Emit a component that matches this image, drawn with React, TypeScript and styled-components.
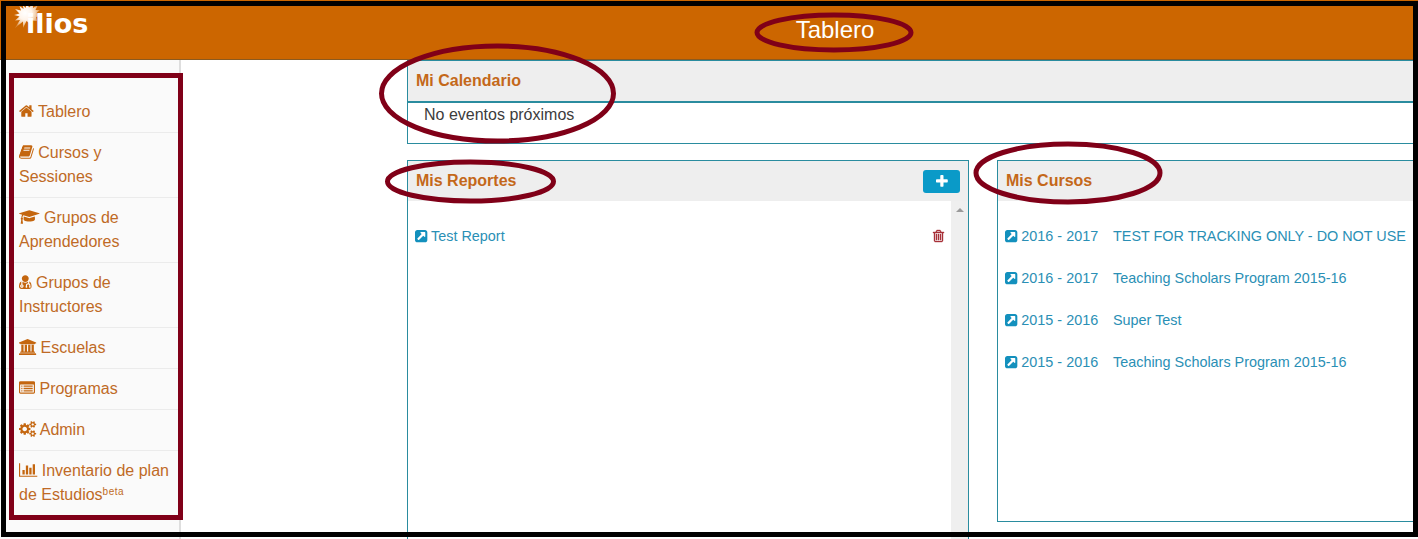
import React from "react";
import styled, { createGlobalStyle } from "styled-components";

const orange = "#cc6600";
const link = "#2a8fb5";
const teal = "#2a8c9f";
const maroon = "#800018";

const GlobalStyle = createGlobalStyle`
  * { box-sizing: border-box; }
  html, body { margin: 0; overflow: hidden; background: #fff; }
  body { font-family: "Liberation Sans", Arial, sans-serif; font-size: 16px; line-height: 24px; }
`;

const Page = styled.div`
  position: relative;
  display: flex;
  flex-direction: column;
  width: 1418px;
  height: 539px;
  overflow: hidden;
`;

const Header = styled.header`
  display: grid;
  grid-template-columns: 250px 1fr 250px;
  flex: none;
  height: 60px;
  background: ${orange};
  border-bottom: 1px solid #8a5a20;
`;

const Logo = styled.div`
  display: flex;
  align-items: flex-start;
  padding: 3px 0 0 14px;
`;

const Burst = styled.svg`
  flex: none;
  width: 30px;
  height: 28px;
`;

const LogoText = styled.span`
  margin: 5px 0 0 -18px;
  font: bold 27px/32px "DejaVu Sans", sans-serif;
  color: #fff;
`;

const Title = styled.h1`
  width: 170px;
  justify-self: center;
  text-align: center;
  margin: 15px 0 0 252px;
  font-size: 24px;
  line-height: 30px;
  font-weight: normal;
  color: #fff;
`;

const Body = styled.div`
  display: flex;
  flex: 1;
  min-height: 0;
`;

const Sidebar = styled.nav`
  flex: none;
  width: 181px;
  padding: 32px 0 0;
  background: #fafafa;
  border-right: 2px solid #dedede;
`;

const NavItem = styled.a`
  display: block;
  padding: 8px 8px 8px 19px;
  color: #bf6a26;
  border-bottom: 1px solid #ebebeb;
  &:last-child { border-bottom: 0; }
`;

const Beta = styled.sup`
  font-size: 10px;
  line-height: 0;
  letter-spacing: 0.5px;
  vertical-align: 5px;
`;

const Glyph = styled.svg<{ $color?: string }>`
  fill: ${(p) => p.$color || "currentColor"};
  overflow: visible;
`;

const Main = styled.main`
  display: flex;
  flex-direction: column;
  flex: none;
  gap: 16px;
  width: 1200px;
  margin-left: 226px;
`;

const Panel = styled.section<{ $width?: number; $height: number }>`
  flex: none;
  width: ${(p) => (p.$width ? `${p.$width}px` : "100%")};
  height: ${(p) => p.$height}px;
  border: 1px solid ${teal};
`;

const PanelHeader = styled.div<{ $ruled?: boolean }>`
  display: flex;
  align-items: center;
  justify-content: space-between;
  height: ${(p) => (p.$ruled ? 42 : 40)}px;
  padding: 0 8px;
  background: #eee;
  border-bottom: ${(p) => (p.$ruled ? `2px solid ${teal}` : "0")};
`;

const PanelTitle = styled.h2`
  margin: 0;
  font-size: 16px;
  line-height: 24px;
  color: #c4681a;
`;

const Notice = styled.p`
  margin: 0;
  padding-left: 16px;
  color: #3c3c3c;
`;

const Columns = styled.div`
  display: flex;
  align-items: flex-start;
  gap: 28px;
`;

const AddButton = styled.button`
  display: flex;
  align-items: center;
  justify-content: center;
  width: 37px;
  height: 23px;
  padding: 0;
  border: 0;
  border-radius: 3px;
  background: #0a9ac8;
  color: #fff;
`;

const ReportBody = styled.div`
  display: flex;
  height: 360px;
`;

const ReportList = styled.div`
  flex: 1;
  padding-top: 14px;
`;

const ScrollTrack = styled.div`
  display: flex;
  justify-content: center;
  width: 17px;
  padding-top: 7px;
  background: #efefef;
`;

const ScrollArrow = styled.i`
  width: 0;
  height: 0;
  border: 4px solid transparent;
  border-top: 0;
  border-bottom-color: #9a9a9a;
`;

const Row = styled.div`
  display: flex;
  align-items: center;
  height: 42px;
  padding: 0 7px;
  font-size: 14.4px;
  color: ${link};
`;

const CourseList = styled.div`
  padding-top: 14px;
`;

const Year = styled.span`
  flex: none;
  width: 108px;
`;

const CourseName = styled.span`
  white-space: nowrap;
`;

const ReportName = styled.span`
  flex: 1;
`;

const Frame = styled.div`
  position: absolute;
  inset: 1px 0 2px 1px;
  border: 5px solid #000;
`;

const Marks = styled.svg`
  position: absolute;
  left: 0;
  top: 0;
  fill: none;
  stroke: ${maroon};
  stroke-width: 5;
`;

const gear =
  "v140q0 16-149 31-12 27-30 52 51 113 51 138 0 4-4 7-122 71-124 71-8 0-46-47t-52-68q-20 2-30 2t-30-2q-14 21-52 68t-46 47q-2 0-124-71-4-3-4-7 0-25 51-138-18-25-30-52-149-15-149-31v-140q0-16 149-31 13-29 30-52-51-113-51-138 0-4 4-7 4-2 35-20t59-34 30-16q8 0 46 46.5t52 67.5q20-2 30-2t30 2q51-71 92-112l6-2q4 0 124 70 4 3 4 7 0 25-51 138 17 23 30 52 149 15 149 31z";
const bar = "v-704q0-14-9-23t-23-9h-64q-14 0-23 9t-9 23v704q0 14 9 23t23 9h64q14 0 23-9t9-23z";

type IconDef = { x: number; w: number; d: string };

const icons: Record<string, IconDef> = {
  home: {
    x: 64, w: 1664,
    d: "M1472 992v480q0 26-19 45t-45 19h-384v-384h-256v384h-384q-26 0-45-19t-19-45v-480q0-1 .5-3t.5-3l575-474 575 474q1 2 1 6zm223-69l-62 74q-8 9-21 11h-3q-13 0-21-7l-692-577-692 577q-12 8-24 7-13-2-21-11l-62-74q-8-10-7-23.5t11-21.5l719-599q32-26 76-26t76 26l244 204v-195q0-14 9-23t23-9h192q14 0 23 9t9 23v408l219 182q10 8 11 21.5t-7 23.5z",
  },
  book: {
    x: 64, w: 1664,
    d: "M1703 478q40 57 18 129l-275 906q-19 64-76.5 107.5t-122.5 43.5h-923q-77 0-148.5-53.5t-99.5-131.5q-24-67-2-127 0-4 3-27t4-37q1-8-3-21.5t-3-19.5q2-11 8-21t16.5-23.5 16.5-23.5q23-38 45-91.5t30-91.5q3-10 .5-30t-.5-28q3-11 17-28t17-23q21-36 42-92t25-90q1-9-2.5-32t.5-28q4-13 22-30.5t22-22.5q19-26 42.5-84.5t27.5-96.5q1-8-3-25.5t-2-26.5q2-8 9-18t18-23 17-21q8-12 16.5-30.5t15-35 16-36 19.5-32 26.5-23.5 36-11.5 47.5 5.5l-1 3q38-9 51-9h761q74 0 114 56t18 130l-274 906q-36 119-71.5 153.5t-128.5 34.5h-869q-27 0-38 15-11 16-1 43 24 70 144 70h923q29 0 56-15.5t35-41.5l300-987q7-22 5-57 38 15 59 43zm-1064 2q-4 13 2 22.5t20 9.5h608q13 0 25.5-9.5t16.5-22.5l21-64q4-13-2-22.5t-20-9.5h-608q-13 0-25.5 9.5t-16.5 22.5zm-83 256q-4 13 2 22.5t20 9.5h608q13 0 25.5-9.5t16.5-22.5l21-64q4-13-2-22.5t-20-9.5h-608q-13 0-25.5 9.5t-16.5 22.5z",
  },
  graduation: {
    x: 0, w: 2304,
    d: "M1774 836l18 316q4 69-82 128t-235 93.5-323 34.5-323-34.5-235-93.5-82-128l18-316 574 181q22 7 48 7t48-7zm530-324q0 23-22 31l-1120 352q-4 1-10 1t-10-1l-652-206q-43 34-71 111.5t-34 178.5q63 36 63 109 0 69-58 107l58 433q2 14-8 25-9 11-24 11h-192q-15 0-24-11-10-11-8-25l58-433q-58-38-58-107 0-73 65-111 11-207 98-330l-333-104q-22-8-22-31t22-31l1120-352q4-1 10-1t10 1l1120 352q22 8 22 31z",
  },
  doctor: {
    x: 192, w: 1408,
    d: "M576 1344q0 26-19 45t-45 19-45-19-19-45 19-45 45-19 45 19 19 45zm1024 64q0 121-73 192t-194 71h-874q-121 0-194-71t-73-192q0-68 5.5-131t24-138 47.5-132.5 81-103 120-60.5q-22 52-22 120v203q-58 20-93 70t-35 111q0 80 56 136t136 56 136-56 56-136q0-61-35.5-111t-92.5-70v-203q0-62 25-93 132 104 295 104t295-104q25 31 25 93v64q-106 0-181 75t-75 181v89q-32 29-32 71 0 40 28 68t68 28 68-28 28-68q0-42-32-71v-89q0-52 38-90t90-38 90 38 38 90v89q-32 29-32 71 0 40 28 68t68 28 68-28 28-68q0-42-32-71v-89q0-68-34.5-127.5t-93.5-93.5q0-10 .5-42.5t0-48-2.5-41.5-7-47-13-40q68 15 120 60.5t81 103 47.5 132.5 24 138 5.5 131zm-320-896q0 159-112.5 271.5t-271.5 112.5-271.5-112.5-112.5-271.5 112.5-271.5 271.5-112.5 271.5 112.5 112.5 271.5z",
  },
  university: {
    x: 0, w: 1920,
    d: "M960 0l960 384v128h-128q0 26-20.5 45t-48.5 19h-1526q-28 0-48.5-19t-20.5-45h-128v-128zm-704 640h256v768h128v-768h256v768h128v-768h256v768h128v-768h256v768h59q28 0 48.5 19t20.5 45v64h-1664v-64q0-26 20.5-45t48.5-19h59v-768zm1595 960q28 0 48.5 19t20.5 45v128h-1920v-128q0-26 20.5-45t48.5-19h1782z",
  },
  list: {
    x: 0, w: 1792,
    d: "M256 624h128v144h-128zM256 880h128v144h-128zM256 1136h128v144h-128zM512 624h1024v144h-1024zM512 880h1024v144h-1024zM512 1136h1024v144h-1024zM1664 1376v-832q0-13-9.5-22.5t-22.5-9.5h-1472q-13 0-22.5 9.5t-9.5 22.5v832q0 13 9.5 22.5t22.5 9.5h1472q13 0 22.5-9.5t9.5-22.5zm128-1088v1088q0 66-47 113t-113 47h-1472q-66 0-113-47t-47-113v-1088q0-66 47-113t113-47h1472q66 0 113 47t47 113z",
  },
  cogs: {
    x: 0, w: 1920,
    d: "M896 896q0-106-75-181t-181-75-181 75-75 181 75 181 181 75 181-75 75-181zm768 512q0-52-38-90t-90-38-90 38-38 90q0 53 37.5 90.5t90.5 37.5 90.5-37.5 37.5-90.5zm0-1024q0-52-38-90t-90-38-90 38-38 90q0 53 37.5 90.5t90.5 37.5 90.5-37.5 37.5-90.5zm-384 421v185q0 10-7 19.5t-16 10.5l-155 24q-11 35-32 76 34 48 90 115 7 11 7 20 0 12-7 19-23 30-82.5 89.5t-78.5 59.5q-11 0-21-7l-115-90q-37 19-77 31-11 108-23 155-7 24-30 24h-186q-11 0-20-7.5t-10-17.5l-23-153q-34-10-75-31l-118 89q-7 7-20 7-11 0-21-8-144-133-144-160 0-9 7-19 10-14 41-53t47-61q-23-44-35-82l-152-24q-10-1-17-9.5t-7-19.5v-185q0-10 7-19.5t16-10.5l155-24q11-35 32-76-34-48-90-115-7-11-7-20 0-12 7-20 22-30 82-89t79-59q11 0 21 7l115 90q34-18 77-32 11-108 23-154 7-24 30-24h186q11 0 20 7.5t10 17.5l23 153q34 10 75 31l118-89q8-7 20-7 11 0 21 8 144 133 144 160 0 8-7 19-12 16-42 54t-45 60q23 48 34 82l152 23q10 2 17 10.5t7 19.5zM1920 1338" + gear + "M1920 314" + gear,
  },
  chart: {
    x: 0, w: 2048,
    d: "M640 896v512h-256v-512h256zm384-512v1024h-256v-1024h256zm1024 1152v128h-2048v-1536h128v1408h1920zm-640-896v768h-256v-768h256zm384-384v1152h-256v-1152h256z",
  },
  external: {
    x: 128, w: 1536,
    d: "M1408 928v-480q0-26-19-45t-45-19h-480q-42 0-59 39-17 41 14 70l144 144-534 534q-19 19-19 45t19 45l102 102q19 19 45 19t45-19l534-534 144 144q18 19 45 19 12 0 25-5 39-17 39-59zm256-512v960q0 119-84.5 203.5t-203.5 84.5h-960q-119 0-203.5-84.5t-84.5-203.5v-960q0-119 84.5-203.5t203.5-84.5h960q119 0 203.5 84.5t84.5 203.5z",
  },
  plus: {
    x: 192, w: 1408,
    d: "M1600 736v192q0 40-28 68t-68 28h-416v416q0 40-28 68t-68 28h-192q-40 0-68-28t-28-68v-416h-416q-40 0-68-28t-28-68v-192q0-40 28-68t68-28h416v-416q0-40 28-68t68-28h192q40 0 68 28t28 68v416h416q40 0 68 28t28 68z",
  },
  trash: {
    x: 192, w: 1408,
    d: "M704 1376" + bar + "M960 1376" + bar + "M1216 1376" + bar + "M672 384h448l-48-117q-7-9-17-11h-317q-10 2-17 11zM1600 416v64q0 14-9 23t-23 9h-96v948q0 83-47 143.5t-113 60.5h-832q-66 0-113-58.5t-47-141.5v-952h-96q-14 0-23-9t-9-23v-64q0-14 9-23t23-9h309l70-167q15-37 54-63t79-26h320q40 0 79 26t54 63l70 167h309q14 0 23 9t9 23zM1344 512h-896v948q0 22 7 40.5t14.5 27 10.5 8.5h832q3 0 10.5-8.5t14.5-27 7-40.5z",
  },
};

function Icon({ name, size = 16, color, weight = 0 }: { name: string; size?: number; color?: string; weight?: number }) {
  const { x, w, d } = icons[name];
  return (
    <Glyph
      $color={color}
      viewBox={`${x} 0 ${w} 1792`}
      width={(w / 1792) * size}
      height={size}
      style={{ verticalAlign: -size / 7 }}
    >
      <path d={d} fillRule="evenodd" stroke={color} strokeWidth={weight} />
    </Glyph>
  );
}

const nav = [
  { icon: "home", label: "Tablero" },
  { icon: "book", label: "Cursos y Sessiones" },
  { icon: "graduation", label: "Grupos de Aprendedores" },
  { icon: "doctor", label: "Grupos de Instructores" },
  { icon: "university", label: "Escuelas" },
  { icon: "list", label: "Programas" },
  { icon: "cogs", label: "Admin" },
  { icon: "chart", label: "Inventario de plan de Estudios", beta: true },
];

const courses = [
  ["2016 - 2017", "TEST FOR TRACKING ONLY - DO NOT USE"],
  ["2016 - 2017", "Teaching Scholars Program 2015-16"],
  ["2015 - 2016", "Super Test"],
  ["2015 - 2016", "Teaching Scholars Program 2015-16"],
];

export default function App() {
  return (
    <Page>
      <GlobalStyle />
      <Header>
        <Logo>
          <Burst viewBox="0 0 30 28">
            <defs>
              <radialGradient id="sun" gradientUnits="userSpaceOnUse" cx="11" cy="10" r="15">
                <stop offset="0" stopColor="#fff" />
                <stop offset="0.45" stopColor="#fff4ea" />
                <stop offset="0.75" stopColor="#f0c9a2" />
                <stop offset="1" stopColor="#d98a3c" />
              </radialGradient>
            </defs>
            <path
              fill="url(#sun)"
              d="M9 2L11.500 5 13 0 15 4.500 19 1 19 5 24 2 21.500 7 26 7 22.500 10 27 13 22 14 23 18 18 17.500 15 20 12.500 18 9 25 9 18.500 1 25 6 17 1 17.500 5.500 13.500 0 12 5.500 10.500 1 6 7 7.500 5.500 3 9.500 6Z"
            />
          </Burst>
          <LogoText>ilios</LogoText>
        </Logo>
        <Title>Tablero</Title>
      </Header>
      <Body>
        <Sidebar>
          {nav.map((item) => (
            <NavItem key={item.label}>
              <Icon name={item.icon} color="#c4660f" /> {item.label}
              {item.beta && <Beta>beta</Beta>}
            </NavItem>
          ))}
        </Sidebar>
        <Main>
          <Panel $height={84}>
            <PanelHeader $ruled>
              <PanelTitle>Mi Calendario</PanelTitle>
            </PanelHeader>
            <Notice>No eventos próximos</Notice>
          </Panel>
          <Columns>
            <Panel $width={562} $height={400}>
              <PanelHeader>
                <PanelTitle>Mis Reportes</PanelTitle>
                <AddButton aria-label="+">
                  <Icon name="plus" size={15} />
                </AddButton>
              </PanelHeader>
              <ReportBody>
                <ReportList>
                  <Row>
                    <ReportName>
                      <Icon name="external" size={14.4} color="#1390bd" /> Test Report
                    </ReportName>
                    <Icon name="trash" size={14} color="#a83238" weight={50} />
                  </Row>
                </ReportList>
                <ScrollTrack>
                  <ScrollArrow />
                </ScrollTrack>
              </ReportBody>
            </Panel>
            <Panel $width={610} $height={362}>
              <PanelHeader>
                <PanelTitle>Mis Cursos</PanelTitle>
              </PanelHeader>
              <CourseList>
                {courses.map(([year, name], i) => (
                  <Row key={i}>
                    <Year>
                      <Icon name="external" size={14.4} color="#1390bd" /> {year}
                    </Year>
                    <CourseName>{name}</CourseName>
                  </Row>
                ))}
              </CourseList>
            </Panel>
          </Columns>
        </Main>
      </Body>
      <Frame />
      <Marks width="1418" height="539" viewBox="0 0 1418 539">
        <rect x="11.500" y="75.500" width="169" height="442" />
        <ellipse cx="834" cy="32.500" rx="77" ry="17.500" />
        <ellipse cx="497.500" cy="93.500" rx="116" ry="47.500" />
        <ellipse cx="470.500" cy="181.500" rx="83" ry="19.500" />
        <ellipse cx="1068" cy="173" rx="92" ry="29" />
      </Marks>
    </Page>
  );
}
